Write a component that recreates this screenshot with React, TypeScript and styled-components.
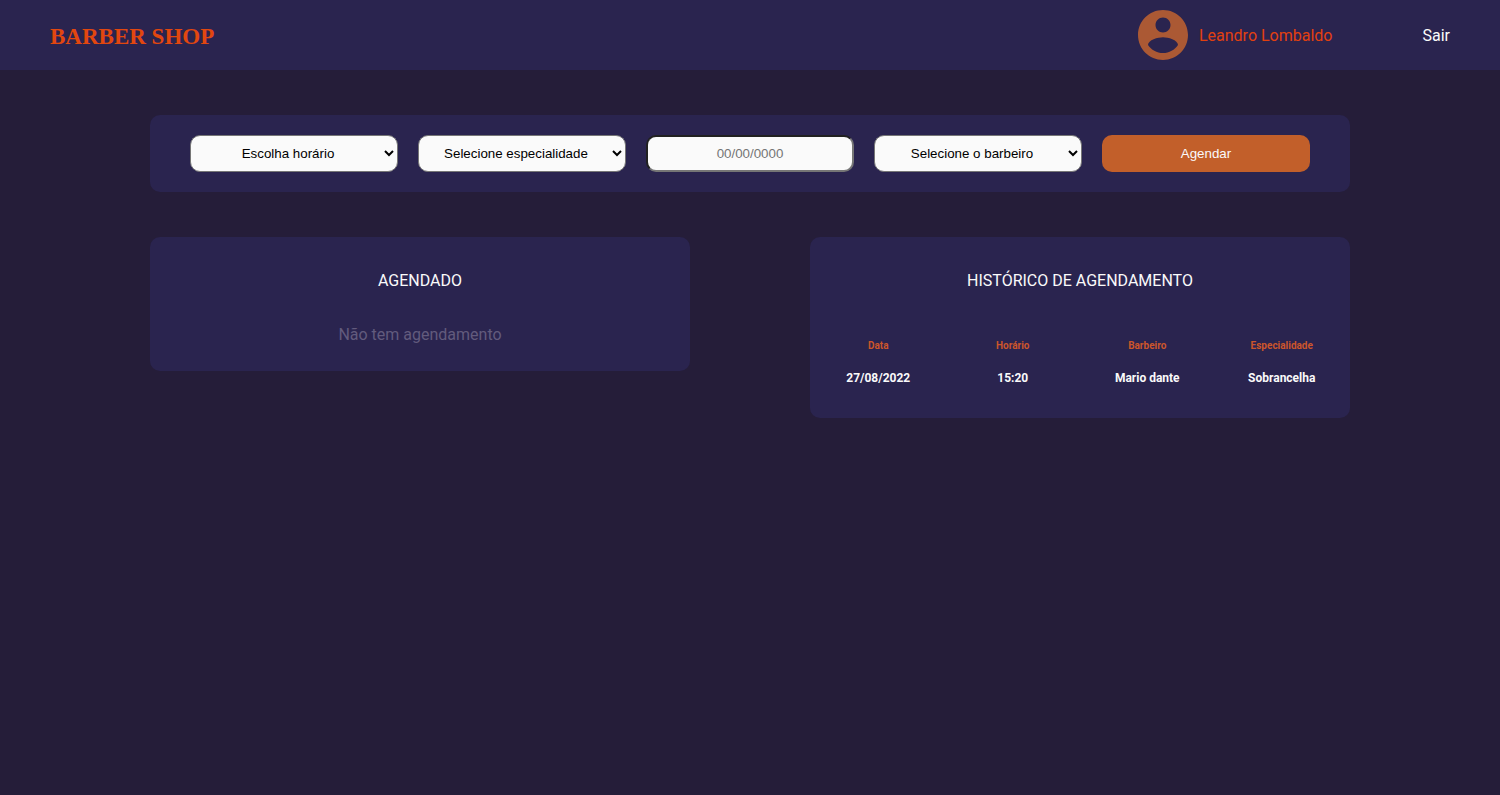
import React from "react";
import styled, { createGlobalStyle, css } from "styled-components";

const GlobalStyle = createGlobalStyle`
  * {
    margin: 0;
    padding: 0;
    box-sizing: border-box;
  }

  body {
    background: #251d39;
    color: #fafafa;
    font-family: Roboto, sans-serif;
    font-size: 16px;
    line-height: 20px;
  }
`;

const Header = styled.header`
  display: flex;
  align-items: center;
  justify-content: space-between;
  height: 70px;
  padding: 0 50px;
  background: #2a244f;
`;

const Logo = styled.h1`
  padding-top: 4px;
  color: #e2470f;
  font-family: "Source Serif Pro", "Liberation Serif", serif;
  font-size: 23px;
  font-weight: 700;
  line-height: 32px;
`;

const Nav = styled.nav`
  display: flex;
  align-items: center;
  gap: 90px;
  line-height: 22px;
`;

const Profile = styled.a`
  display: flex;
  align-items: center;
  gap: 6px;
  color: #e2400f;
  text-decoration: none;
`;

const AvatarIcon = styled.svg`
  width: 60px;
  height: 60px;
  fill: #ab5934;
`;

const NavLabel = styled.span`
  display: block;
  padding-top: 2px;
`;

const LogoutButton = styled.button`
  border: 0;
  background: none;
  color: #fafafa;
  font: inherit;
  cursor: pointer;
`;

const Main = styled.main`
  display: flex;
  flex-direction: column;
  gap: 45px;
  padding: 45px 10%;
`;

const BookingForm = styled.form`
  display: grid;
  grid-template-columns: repeat(5, minmax(0, 1fr));
  gap: 20px;
  padding: 20px 40px;
  border-radius: 10px;
  background: #2a244f;
`;

const control = css`
  width: 100%;
  height: 37px;
  border-radius: 10px;
  font-family: "Liberation Sans", Arial, sans-serif;
  text-align: center;
`;

const Select = styled.select`
  ${control}
  border: 1px solid #767676;
  background-color: #fafafa;
  color: #000;
`;

const DateInput = styled.input`
  ${control}
  border: 2px inset #767676;
  background: #fafafa;
  color: #000;

  &::placeholder {
    color: #757575;
  }
`;

const SubmitButton = styled.button`
  ${control}
  border: 0;
  background: #c25f2a;
  color: #fafafa;
  cursor: pointer;
`;

const Panels = styled.div`
  display: grid;
  grid-template-columns: repeat(2, minmax(0, 1fr));
  align-items: start;
  column-gap: 10%;
`;

const Panel = styled.section`
  padding: 34px 0 26px;
  border-radius: 10px;
  background: #2a244f;
  text-align: center;
`;

const PanelTitle = styled.h2`
  font-size: 16px;
  font-weight: 400;
`;

const EmptyMessage = styled.p`
  margin-top: 34px;
  color: #625b7d;
`;

const HistoryTable = styled.table`
  width: 100%;
  margin-top: 38px;
  border-spacing: 2px;
  table-layout: fixed;
`;

const ColumnHeader = styled.th`
  height: 30px;
  color: #cc562b;
  font-size: 10px;
  font-weight: 700;
  line-height: 14px;
`;

const Cell = styled.td`
  height: 30px;
  padding-bottom: 1px;
  font-size: 12px;
  font-weight: 700;
  line-height: 14px;
`;

const HistoryPanel = styled(Panel)`
  padding-bottom: 23px;
`;

const fields = {
  time: ["Escolha horário", "15:20"],
  specialty: ["Selecione especialidade", "Sobrancelha"],
  barber: ["Selecione o barbeiro", "Mario dante"],
};

const columns = ["Data", "Horário", "Barbeiro", "Especialidade"];
const history = [["27/08/2022", "15:20", "Mario dante", "Sobrancelha"]];

function Field({ label, options }: { label: string; options: string[] }) {
  return (
    <Select aria-label={label} defaultValue={options[0]}>
      {options.map((option) => (
        <option key={option}>{option}</option>
      ))}
    </Select>
  );
}

export default function App() {
  return (
    <>
      <GlobalStyle />
      <Header>
        <Logo>BARBER SHOP</Logo>
        <Nav>
          <Profile href="#perfil">
            <AvatarIcon viewBox="0 0 24 24" aria-hidden="true">
              <path d="M12 2C6.48 2 2 6.48 2 12s4.48 10 10 10 10-4.48 10-10S17.52 2 12 2zm0 3c1.66 0 3 1.34 3 3s-1.34 3-3 3-3-1.34-3-3 1.34-3 3-3zm0 14.2c-2.5 0-4.71-1.28-6-3.22.03-1.99 4-3.08 6-3.08 1.99 0 5.97 1.09 6 3.08-1.29 1.94-3.5 3.22-6 3.22z" />
            </AvatarIcon>
            <NavLabel>Leandro Lombaldo</NavLabel>
          </Profile>
          <LogoutButton type="button">
            <NavLabel>Sair</NavLabel>
          </LogoutButton>
        </Nav>
      </Header>
      <Main>
        <BookingForm onSubmit={(event) => event.preventDefault()}>
          <Field label="Horário" options={fields.time} />
          <Field label="Especialidade" options={fields.specialty} />
          <DateInput aria-label="Data" type="text" placeholder="00/00/0000" />
          <Field label="Barbeiro" options={fields.barber} />
          <SubmitButton type="submit">Agendar</SubmitButton>
        </BookingForm>
        <Panels>
          <Panel>
            <PanelTitle>AGENDADO</PanelTitle>
            <EmptyMessage>Não tem agendamento</EmptyMessage>
          </Panel>
          <HistoryPanel>
            <PanelTitle>HISTÓRICO DE AGENDAMENTO</PanelTitle>
            <HistoryTable>
              <thead>
                <tr>
                  {columns.map((column) => (
                    <ColumnHeader key={column} scope="col">
                      {column}
                    </ColumnHeader>
                  ))}
                </tr>
              </thead>
              <tbody>
                {history.map((row) => (
                  <tr key={row.join()}>
                    {row.map((value) => (
                      <Cell key={value}>{value}</Cell>
                    ))}
                  </tr>
                ))}
              </tbody>
            </HistoryTable>
          </HistoryPanel>
        </Panels>
      </Main>
    </>
  );
}
